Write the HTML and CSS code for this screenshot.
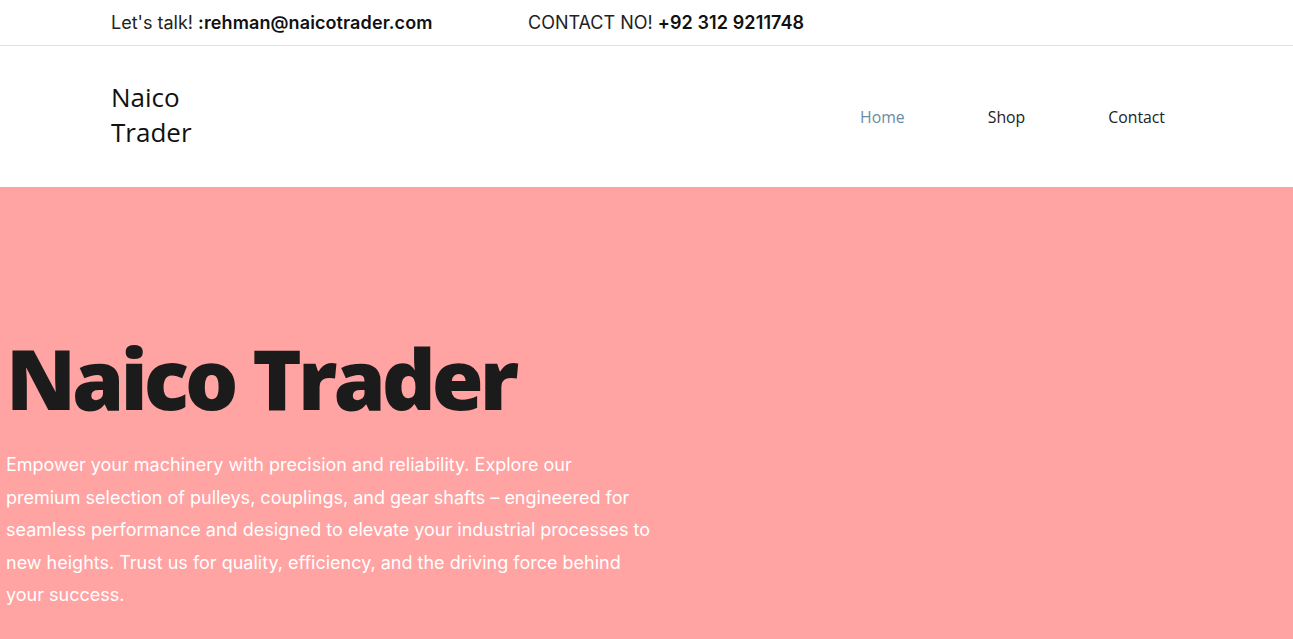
FILE: index.html
```html
<!DOCTYPE html>
<html lang="en">
<head>
<meta charset="utf-8">
<title>Naico Trader</title>
<link rel="stylesheet" href="styles.css">
</head>
<body>
<div class="topbar">
  <div class="topbar-inner">
    <span class="talk">Let's talk! <b>:rehman@naicotrader.com</b></span>
    <span class="phone">CONTACT NO! <b>+92 312 9211748</b></span>
  </div>
</div>
<header class="header">
  <div class="logo">Naico<br>Trader</div>
  <nav class="nav">
    <a class="nav-link active" href="#">Home</a>
    <a class="nav-link" href="#">Shop</a>
    <a class="nav-link" href="#">Contact</a>
  </nav>
</header>
<section class="hero">
  <h1 class="hero-title">Naico Trader</h1>
  <p class="hero-text">Empower your machinery with precision and reliability. Explore our premium selection of pulleys, couplings, and gear shafts – engineered for seamless performance and designed to elevate your industrial processes to new heights. Trust us for quality, efficiency, and the driving force behind your success.</p>
</section>
</body>
</html>
```
FILE: styles.css
```css
* { box-sizing: border-box; }
html, body { margin: 0; padding: 0; }
body { background: #fff; font-family: "Inter", sans-serif; overflow: hidden; }
.topbar { height: 46px; border-bottom: 1px solid #e2e2e2; }
.topbar-inner { display: flex; align-items: center; height: 45px; padding-left: 111px; font-size: 18px; color: #222; }
.topbar b { font-weight: 600; color: #111; letter-spacing: 0.1px; }
.talk { width: 417px; }
.header { height: 141px; display: flex; align-items: center; justify-content: space-between; padding: 0 128px 0 111px; }
.logo { font-family: "Open Sans", sans-serif; font-size: 26px; font-weight: 500; line-height: 35px; color: #111; margin-bottom: 4px; }
.nav { display: flex; }
.nav-link { font-family: "Open Sans", sans-serif; font-size: 15.8px; font-weight: 500; color: #222; text-decoration: none; margin-left: 83px; }
.nav-link.active { color: #6b8aa5; }
.hero { background: #ffa3a3; min-height: 460px; padding: 136px 0 0 6px; }
.hero-title { margin: 0; font-family: "Open Sans", sans-serif; font-weight: 800; font-size: 84px; line-height: 110px; color: #1b1b1b; letter-spacing: -4px; }
.hero-text { margin: 16px 0 0; width: 645px; font-size: 18px; line-height: 32.5px; color: #fff; }
```
